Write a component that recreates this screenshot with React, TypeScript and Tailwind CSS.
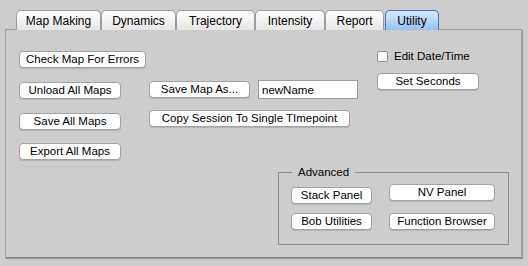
import React from 'react';

const tabs = ['Map Making', 'Dynamics', 'Trajectory', 'Intensity', 'Report', 'Utility'];
const tabWidths = ['w-[85px]', 'w-[75px]', 'w-[79px]', 'w-[70px]', 'w-[59px]', 'ml-[1px] w-[54px]'];

function Btn({ label, w, className = '' }: { label: string; w: string; className?: string }) {
  return (
    <button
      type="button"
      className={`${w} h-[17px] rounded-[4px] border border-[#a2a2a2] bg-white text-center leading-[15px] text-black shadow-[0_1px_0_rgba(0,0,0,0.12)] ${className}`}
    >
      {label}
    </button>
  );
}

export default function App() {
  return (
    <div className="h-[266px] w-[528px] overflow-hidden bg-[#cdcdcd] text-[11.5px] text-black [font-family:'Liberation_Sans',Arial,sans-serif]">
      <div className="flex pl-[16px] pt-[10px]">
        {tabs.map((t, i) => {
          const active = t === 'Utility';
          return (
            <div
              key={t}
              className={`${tabWidths[i]} relative z-10 flex h-[20px] items-center justify-center rounded-t-[5px] border border-b-0 text-[12px] ${
                active
                  ? 'border-[#4a74c0] bg-gradient-to-b from-[#d9e9fc] to-[#94c2f3]'
                  : 'border-[#9d9d9d] bg-gradient-to-b from-white to-[#e6e6e6]'
              }`}
            >
              {t}
            </div>
          );
        })}
      </div>

      <div className="ml-[5px] mt-[-1px] h-[229px] w-[517px] border border-[#9a9a9a] border-b-[#808080] shadow-[1px_1px_1px_rgba(0,0,0,0.25)]">
        <div className="flex pt-[21px]">
          <div className="ml-[13px] flex w-[126px] flex-col items-start">
            <Btn label="Check Map For Errors" w="w-[127px]" />
            <Btn label="Unload All Maps" w="w-[102px]" className="mt-[14px]" />
            <Btn label="Save All Maps" w="w-[102px]" className="mt-[14px]" />
            <Btn label="Export All Maps" w="w-[102px]" className="mt-[13px]" />
          </div>

          <div className="ml-[4px] flex flex-col items-start pt-[29px]">
            <div className="flex items-center">
              <Btn label="Save Map As..." w="w-[101px]" />
              <input
                readOnly
                value="newName"
                className="ml-[8px] h-[19px] w-[100px] border border-[#9c9c9c] bg-white px-[3px] text-[11.5px] outline-none"
              />
            </div>
            <Btn label="Copy Session To Single TImepoint" w="w-[201px]" className="mt-[11px]" />
          </div>

          <div className="ml-[19px] flex flex-col items-start">
            <label className="flex h-[11px] items-center">
              <span className="h-[11px] w-[11px] rounded-[2px] border border-[#8e8e8e] bg-white" />
              <span className="ml-[6px]">Edit Date/Time</span>
            </label>
            <Btn label="Set Seconds" w="w-[102px]" className="mt-[11px]" />
          </div>
        </div>

        <div className="relative ml-[272px] mt-[12px] h-[73px] w-[231px] border border-[#8c8c8c]">
          <span className="absolute left-[13px] top-[-9px] bg-[#cdcdcd] px-[6px] leading-[16px]">Advanced</span>
          <div className="grid grid-cols-[81px_106px] gap-x-[17px] pl-[12px] pt-[11px]">
            <Btn label="Stack Panel" w="w-[81px]" className="mt-[3px]" />
            <Btn label="NV Panel" w="w-[106px]" />
            <Btn label="Bob Utilities" w="w-[81px]" className="mt-[9px]" />
            <Btn label="Function Browser" w="w-[106px]" className="mt-[9px]" />
          </div>
        </div>
      </div>
    </div>
  );
}
